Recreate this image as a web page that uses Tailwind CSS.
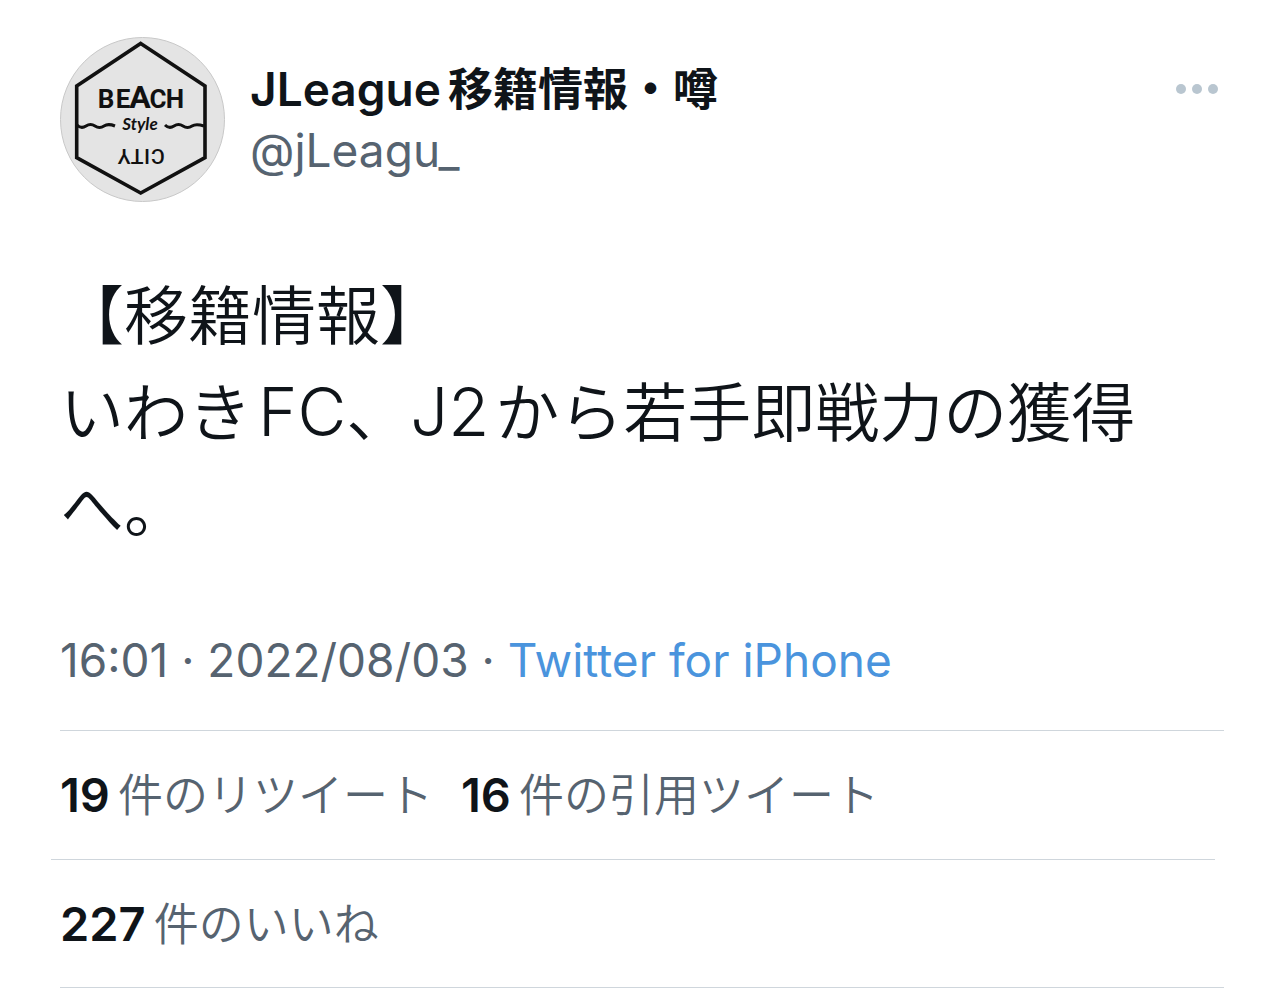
<!DOCTYPE html>
<html lang="ja">
<head>
  <meta charset="UTF-8" />
  <meta name="viewport" content="width=device-width, initial-scale=1.0" />
  <title>JLeague移籍情報・噂</title>
  <script src="https://cdn.jsdelivr.net/npm/@tailwindcss/browser@4"></script>
</head>
<body class="bg-white font-['Inter','Noto_Sans_CJK_JP',sans-serif] text-[#0f1419]">
  <article class="px-[60px] pt-[37px]">
    <!-- Author -->
    <header class="flex items-start">
      <a href="#" aria-label="JLeague移籍情報・噂" class="shrink-0">
        <svg class="block size-[165px]" viewBox="0 0 165 165" fill="none" stroke="#111" text-anchor="middle">
          <circle cx="82.5" cy="82.5" r="82" fill="#e4e4e4" stroke="#c8c8c8" stroke-width="1" />
          <path d="M80.700 6.500 145 49v71.700L80.700 156 16.700 120.700V49Z" stroke-width="3.600" />
          <path d="M17 88c3 3 6 3 9 1s6-2 9 0 6 2 9 0 6-2 11 0M105 88c3 3 6 3 9 1s6-2 9 0 6 2 9 0 6-2 12 0" stroke-width="3" />
          <g fill="#111" stroke="none" class="font-['Roboto',sans-serif] font-bold">
            <text class="text-[26px]" y="71" x="46">B</text>
            <text class="text-[26px]" y="71" x="63">E</text>
            <text class="text-[32px]" y="71" x="80">A</text>
            <text class="text-[26px]" y="71" x="98">C</text>
            <text class="text-[26px]" y="71" x="115">H</text>
          </g>
          <g fill="#111" stroke="none" class="font-['Roboto',sans-serif] text-[21px] font-medium" transform="rotate(180 82 120)">
            <text y="128" x="66">C</text>
            <text y="128" x="77">I</text>
            <text y="128" x="87">T</text>
            <text y="128" x="100">Y</text>
          </g>
          <text x="80" y="93" fill="#111" stroke="none" class="font-['Lato',sans-serif] text-[17px] font-bold italic">Style</text>
        </svg>
      </a>
      <div class="ml-[25px] mt-[22px] min-w-0 flex-1 text-[46px] leading-[60px]">
        <h1 class="font-semibold">JLeague<span class="ml-[7px] text-[45px]">移籍情報・噂</span></h1>
        <p class="text-[#566370]">@jLeagu_</p>
      </div>
      <button type="button" aria-label="その他" class="mr-[6px] mt-[47px] flex gap-[6px]">
        <span class="size-[10px] rounded-full bg-[#b9c6d0]"></span>
        <span class="size-[10px] rounded-full bg-[#b9c6d0]"></span>
        <span class="size-[10px] rounded-full bg-[#b9c6d0]"></span>
      </button>
    </header>

    <!-- Tweet text -->
    <div class="mt-[66px] text-[64px] font-[350] leading-[96px]">
      <p>【移籍情報】</p>
      <p>いわき<span class="ml-[6px] text-[67px]">FC</span>、<span class="mr-[6px] text-[67px]">J2</span>から若手即戦力の獲得へ。</p>
    </div>

    <p class="mt-[73px] text-[46px] leading-[60px] text-[#566370]">16:01 · 2022/08/03 · <a href="#" class="text-[#4a94dd]">Twitter for iPhone</a></p>

    <!-- Stats -->
    <hr class="mt-[40px] border-[#cfd6dc]" />
    <div class="flex gap-[28px] pt-[34px] pb-[33px] text-[45px] leading-[60px] font-[350] text-[#566370]">
      <a href="#"><b class="mr-2 text-[47px] font-semibold text-[#0f1419]">19</b>件のリツイート</a>
      <a href="#"><b class="mr-2 text-[47px] font-semibold text-[#0f1419]">16</b>件の引用ツイート</a>
    </div>
    <hr class="-ml-[9px] mr-[9px] border-[#cfd6dc]" />
    <div class="pt-[34px] pb-[32px] text-[45px] leading-[60px] font-[350] text-[#566370]">
      <a href="#"><b class="mr-2 text-[47px] font-semibold text-[#0f1419]">227</b>件のいいね</a>
    </div>
    <hr class="border-[#cfd6dc]" />
  </article>
</body>
</html>
